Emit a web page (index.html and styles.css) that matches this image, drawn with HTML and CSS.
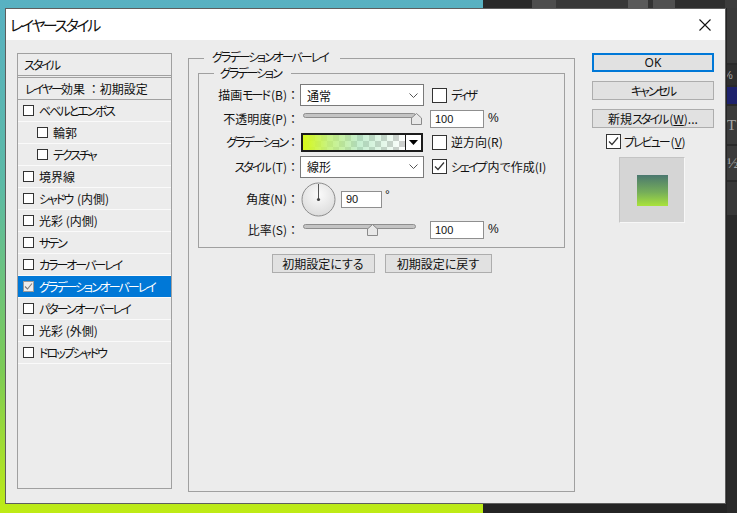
FILE: index.html
```html
<!DOCTYPE html>
<html lang="ja">
<head>
<meta charset="utf-8">
<title>レイヤースタイル</title>
<link rel="stylesheet" href="styles.css">
</head>
<body>
<div class="desktop">
  <div class="desk-left"></div>
  <div class="desk-right">
    <div class="ps-top">
      <span class="t1"></span><span class="t2"></span><span class="t3"></span><span class="t4"></span><span class="t5"></span><span class="t6"></span><span class="t7"></span><span class="t8"></span>
    </div>
    <div class="ps-main">
      <div class="ps-panel">
        <div class="pp pp1"></div>
        <div class="pp pp3"><span class="pct">%</span></div>
        <div class="pp pp4"></div>
        <div class="pp pp5"><span class="glyph">T</span></div>
        <div class="pp pp6"><span class="glyph">½</span></div>
        <div class="pp pp7"></div>
      </div>
    </div>
  </div>
</div>

<div class="dialog">
  <div class="titlebar">
    <span class="title"><span class="k">レイヤースタイル</span></span>
    <svg class="close" width="12" height="12" viewBox="0 0 12 12"><path d="M0.5 0.5 L11.5 11.5 M11.5 0.5 L0.5 11.5" stroke="#111" stroke-width="1.1" fill="none"/></svg>
  </div>
  <div class="dlg-body">
    <div class="style-list">
      <div class="list-head"><span class="k">スタイル</span></div>
      <div class="list-defaults"><span class="k">レイヤー</span>効果 <span class="fw">：</span>初期設定</div>
      <div class="list-item"><span class="cb-sm"></span><span class="k">ベベルとエンボス</span></div>
      <div class="list-item sub"><span class="cb-sm"></span><span>輪郭</span></div>
      <div class="list-item sub"><span class="cb-sm"></span><span class="k">テクスチャ</span></div>
      <div class="list-item"><span class="cb-sm"></span><span>境界線</span></div>
      <div class="list-item"><span class="cb-sm"></span><span><span class="k ke">シャドウ</span> (内側)</span></div>
      <div class="list-item"><span class="cb-sm"></span><span>光彩 (内側)</span></div>
      <div class="list-item"><span class="cb-sm"></span><span class="k">サテン</span></div>
      <div class="list-item"><span class="cb-sm"></span><span class="k">カラーオーバーレイ</span></div>
      <div class="list-item selected"><span class="cb-sm checked"><svg width="9" height="9" viewBox="0 0 9 9"><path d="M1 4.5 L3.5 7 L8 1.5" stroke="#7a7a7a" stroke-width="1.1" fill="none"/></svg></span><span class="k">グラデーションオーバーレイ</span></div>
      <div class="list-item"><span class="cb-sm"></span><span class="k">パターンオーバーレイ</span></div>
      <div class="list-item"><span class="cb-sm"></span><span>光彩 (外側)</span></div>
      <div class="list-item"><span class="cb-sm"></span><span class="k">ドロップシャドウ</span></div>
    </div>

    <div class="group outer">
      <div class="group-title"><span class="k">グラデーションオーバーレイ</span></div>
      <div class="group inner">
        <div class="group-title"><span class="k">グラデーション</span></div>
        <div class="form-grid">
          <div class="lbl">描画<span class="k ke">モード</span>(B)<span class="fw">：</span></div>
          <div class="select"><span>通常</span><svg width="9" height="5" viewBox="0 0 9 5"><path d="M0.5 0.5 L4.5 4.5 L8.5 0.5" stroke="#555" fill="none"/></svg></div>
          <div class="opt"><span class="cb"></span><span class="k">ディザ</span></div>

          <div class="lbl">不透明度(P)<span class="fw">：</span></div>
          <svg class="slider" width="122" height="14" viewBox="0 0 122 14">
            <rect x="2.5" y="1.5" width="112" height="4" rx="2" fill="#c4c4c4" stroke="#8e8e8e"/>
            <path d="M110.5 12.5 V6 L115.5 1.5 L120.5 6 V12.5 Z" fill="#e8e8e8" stroke="#8a8a8a"/>
          </svg>
          <div class="numwrap"><span class="num">100</span><span class="unit">%</span></div>

          <div class="lbl"><span class="k">グラデーション</span><span class="fw">：</span></div>
          <div class="grad"><div class="grad-fill"></div><div class="grad-arrow"><svg width="9" height="5" viewBox="0 0 9 5"><path d="M0 0 H9 L4.5 5 Z" fill="#000"/></svg></div></div>
          <div class="opt"><span class="cb"></span><span>逆方向(R)</span></div>

          <div class="lbl"><span class="k ke">スタイル</span>(T)<span class="fw">：</span></div>
          <div class="select"><span>線形</span><svg width="9" height="5" viewBox="0 0 9 5"><path d="M0.5 0.5 L4.5 4.5 L8.5 0.5" stroke="#555" fill="none"/></svg></div>
          <div class="opt"><span class="cb"><svg width="13" height="13" viewBox="0 0 13 13"><path d="M2 6.5 L5 9.5 L11 2.5" stroke="#333" stroke-width="1.2" fill="none"/></svg></span><span><span class="k ke">シェイプ</span>内で作成(I)</span></div>

          <div class="lbl">角度(N)<span class="fw">：</span></div>
          <div class="angle">
            <svg class="dial" width="35" height="35" viewBox="0 0 35 35">
              <defs><radialGradient id="dg" cx="50%" cy="35%" r="65%"><stop offset="0" stop-color="#fbfbfb"/><stop offset="1" stop-color="#dcdcdc"/></radialGradient></defs>
              <circle cx="17.5" cy="17.5" r="16.5" fill="url(#dg)" stroke="#8c8c8c"/>
              <path d="M17.5 17.5 V2" stroke="#555" stroke-width="1"/>
              <circle cx="17.5" cy="17.5" r="1.6" fill="#444"/>
            </svg>
            <span class="num num-sm">90</span><span class="deg">°</span>
          </div>
          <div></div>

          <div class="lbl">比率(S)<span class="fw">：</span></div>
          <svg class="slider" width="122" height="14" viewBox="0 0 122 14">
            <rect x="2.5" y="1.5" width="112" height="4" rx="2" fill="#c4c4c4" stroke="#8e8e8e"/>
            <path d="M66.5 12.5 V6 L71.5 1.5 L76.5 6 V12.5 Z" fill="#e8e8e8" stroke="#8a8a8a"/>
          </svg>
          <div class="numwrap"><span class="num">100</span><span class="unit">%</span></div>
        </div>
      </div>
      <div class="defaults-row">
        <div class="btn btn-a">初期設定にする</div>
        <div class="btn btn-b">初期設定に戻す</div>
      </div>
    </div>

    <div class="side">
      <div class="btn btn-ok">OK</div>
      <div class="btn btn-side"><span class="k">キャンセル</span></div>
      <div class="btn btn-side">新規<span class="k ke">スタイル</span>(<u>W</u>)...</div>
      <div class="preview-row"><span class="cb"><svg width="13" height="13" viewBox="0 0 13 13"><path d="M2 6.5 L5 9.5 L11 2.5" stroke="#333" stroke-width="1.2" fill="none"/></svg></span><span><span class="k ke">プレビュー</span>(<u>V</u>)</span></div>
      <div class="preview-box"><div class="swatch"></div></div>
    </div>
  </div>
</div>
</body>
</html>
```
FILE: styles.css
```css
body {
  margin: 0;
  width: 737px;
  height: 513px;
  overflow: hidden;
  position: relative;
  font-family: "Noto Sans CJK JP", sans-serif;
  font-size: 12px;
  color: #111;
  font-feature-settings: "palt";
}

.fw { font-feature-settings: normal; }
.k { letter-spacing: -2px; }
.ke { margin-right: 2px; }

/* desktop behind the dialog */
.desktop { display: flex; height: 513px; }
.desk-left {
  width: 483px;
  background: linear-gradient(180deg, #58b1c2 0%, #5cbaa6 36%, #7ccb56 72%, #bfeb14 100%);
}
.desk-right { flex: 1; display: flex; flex-direction: column; background: #242424; }
.ps-top { height: 8px; display: flex; }
.ps-top span { display: block; height: 8px; }
.t1 { width: 49px; background: #292929; }
.t2 { width: 24px; background: #4d4d4d; }
.t3 { width: 72px; background: #383838; }
.t4 { width: 20px; background: #5a5a5a; }
.t5 { width: 5px; background: #333; }
.t6 { width: 22px; background: #505050; }
.t7 { width: 50px; background: #2e2e2e; }
.t8 { flex: 1; background: #3c3c3c; }
.ps-main { flex: 1; display: flex; justify-content: flex-end; }
.ps-panel { width: 10px; display: flex; flex-direction: column; gap: 2px; background: #2a2a2a; overflow: hidden; }
.pp { flex: none; overflow: hidden; color: #a5a5a5; }
.pp1 { height: 55px; background: #3a3a3a; }
.pp3 { height: 20px; background: #2f2f2f; font: 11px "Liberation Sans", sans-serif; line-height: 20px; }
.pct { margin-left: -4px; }
.pp4 { height: 17px; background: #1e226c; }
.pp5 { height: 38px; background: #3b3b3b; font: 15px "Liberation Serif", serif; line-height: 38px; }
.pp6 { height: 34px; background: #3b3b3b; font: 15px "Liberation Serif", serif; line-height: 34px; }
.pp7 { height: 33px; background: #383838; }

/* dialog window */
.dialog {
  position: absolute;
  left: 5px;
  top: 8px;
  width: 721px;
  height: 496px;
  box-sizing: border-box;
  border: 1px solid #5e5e5e;
  background: #ececec;
  display: flex;
  flex-direction: column;
}
.titlebar {
  height: 31px;
  flex: none;
  background: #fff;
  display: flex;
  align-items: center;
  justify-content: space-between;
  padding: 0 14px 0 4px;
}
.title { font-size: 15px; line-height: 20px; margin-top: 1px; }
.title .k { letter-spacing: -2.4px; }

.dlg-body { flex: 1; display: flex; align-items: flex-start; padding: 13px 0 0 11px; }

/* style list */
.style-list {
  width: 155px;
  height: 436px;
  box-sizing: border-box;
  border: 1px solid #a0a0a0;
  flex: none;
}
.list-head {
  height: 21px;
  line-height: 21px;
  padding-left: 6px;
  border-bottom: 1px solid #a0a0a0;
}
.list-defaults {
  margin-top: 1px;
  height: 21px;
  line-height: 21px;
  padding-left: 7px;
  border-top: 1px solid #a0a0a0;
  border-bottom: 1px solid #a0a0a0;
  white-space: nowrap;
}
.list-item {
  height: 21px;
  border-bottom: 1px solid #fafafa;
  display: flex;
  align-items: center;
  gap: 5px;
  padding-left: 5px;
  white-space: nowrap;
  line-height: 16px;
}
.list-item.sub { padding-left: 19px; }
.list-item.selected { background: #0078d7; color: #fff; }
.cb-sm {
  width: 11px;
  height: 11px;
  box-sizing: border-box;
  border: 1px solid #333;
  background: #fff;
  flex: none;
  display: flex;
  align-items: center;
  justify-content: center;
}
.cb-sm.checked { border-color: #9a9a9a; background: #ececec; }

/* group boxes */
.group { border: 1px solid #a0a0a0; box-sizing: border-box; }
.group-title { height: 0; display: flex; }
.group-title > span {
  margin-top: -8px;
  height: 14px;
  line-height: 14px;
  background: #ececec;
  white-space: nowrap;
}
.outer {
  flex: none;
  margin: 5px 0 0 16px;
  width: 387px;
  height: 434px;
  padding: 0 9px;
}
.outer > .group-title { padding-left: 6px; }
.outer > .group-title > span { padding: 0 12px 0 8px; margin-top: -9px; }
.inner { margin-top: 14px; padding-bottom: 4px; }
.inner > .group-title { padding-left: 15px; }
.inner > .group-title > span { padding: 0 10px 0 6px; }

.form-grid {
  display: grid;
  grid-template-columns: 101px 124px 1fr;
  grid-template-rows: 22px 26px 20px 29px 36px 26px;
  align-items: center;
  margin-top: 10px;
}
.lbl { text-align: right; padding-right: 1px; white-space: nowrap; line-height: 16px; }
.select {
  height: 22px;
  box-sizing: border-box;
  border: 1px solid #7a7a7a;
  background: #fff;
  display: flex;
  align-items: center;
  justify-content: space-between;
  padding: 0 5px 0 6px;
}
.opt { display: flex; align-items: center; gap: 4px; padding-left: 8px; white-space: nowrap; line-height: 16px; }
.cb {
  width: 15px;
  height: 15px;
  box-sizing: border-box;
  border: 1px solid #333;
  background: #fff;
  flex: none;
  display: flex;
  align-items: center;
  justify-content: center;
}
.slider { display: block; margin-left: 1px; }
.numwrap { display: flex; align-items: center; padding-left: 6px; }
.num {
  width: 54px;
  height: 18px;
  box-sizing: border-box;
  border: 1px solid #8f8f8f;
  background: #fff;
  padding-left: 4px;
  font: 11px/16px "Liberation Sans", sans-serif;
}
.unit { margin-left: 4px; font: 12px "Liberation Sans", sans-serif; margin-top: -2px; }
.grad {
  width: 122px;
  height: 19px;
  margin-left: 1px;
  box-sizing: border-box;
  border: 2px solid #1c1c1c;
  display: flex;
}
.grad-fill {
  flex: 1;
  background:
    linear-gradient(90deg, rgb(214, 249, 24) 0%, rgba(190, 240, 110, 0.85) 25%, rgba(150, 225, 170, 0.55) 55%, rgba(160, 225, 205, 0) 100%),
    repeating-conic-gradient(#cfcfcf 0 25%, #ffffff 0 50%) 0 0 / 12px 12px;
}
.grad-arrow {
  width: 15px;
  border-left: 1px solid #1c1c1c;
  background: #fff;
  display: flex;
  align-items: center;
  justify-content: center;
}
.angle { display: flex; align-items: center; padding-left: 1px; }
.dial { display: block; }
.num-sm { width: 41px; height: 17px; margin-left: 5px; line-height: 15px; }
.deg { font: 12px "Liberation Sans", sans-serif; margin: -8px 0 0 3px; }

.defaults-row { display: flex; justify-content: center; gap: 10px; margin-top: 6px; }

/* buttons */
.btn {
  height: 19px;
  box-sizing: border-box;
  border: 1px solid #adadad;
  background: #e1e1e1;
  display: flex;
  align-items: center;
  justify-content: center;
  line-height: 17px;
  white-space: nowrap;
}
.btn-a { width: 103px; }
.btn-b { width: 107px; }
.btn-ok { border: 2px solid #0078d7; font-family: "Noto Sans", sans-serif; }
.btn-side { margin-top: 9px; }

.side { flex: none; width: 122px; margin-left: 17px; display: flex; flex-direction: column; }
.preview-row { display: flex; align-items: center; gap: 3px; margin-top: 6px; padding-left: 14px; height: 15px; line-height: 16px; white-space: nowrap; }
.preview-box {
  margin: 8px 0 0 27px;
  width: 66px;
  height: 66px;
  box-sizing: border-box;
  background: #d5d5d5;
  border: 1px solid;
  border-color: #c4c4c4 #f7f7f7 #f7f7f7 #c4c4c4;
  display: flex;
  align-items: center;
  justify-content: center;
}
.swatch { width: 31px; height: 31px; background: linear-gradient(180deg, #4b786f 0%, #75ad5a 55%, #a9e33a 100%); }
u { text-underline-offset: 1px; }
```
